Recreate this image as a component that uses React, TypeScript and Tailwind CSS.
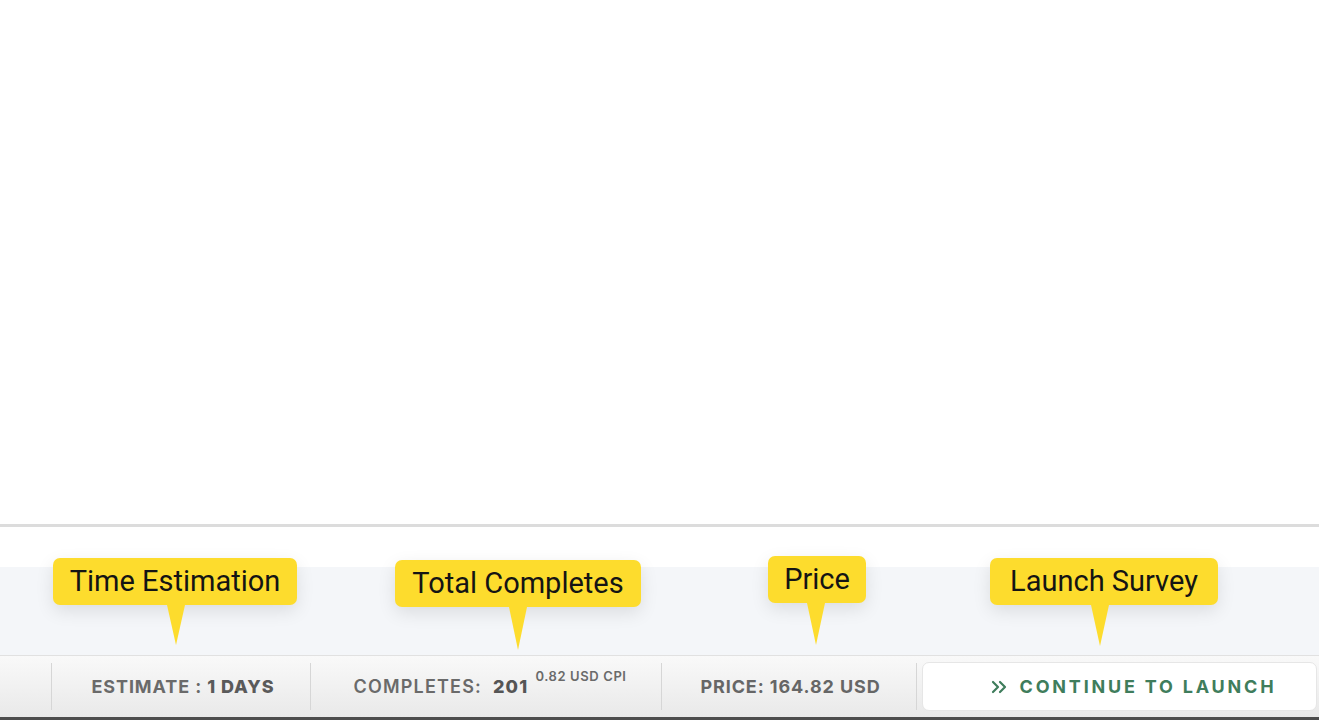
import { ChevronsRight } from 'lucide-react';

type TipProps = {
  label: string;
  className: string;
  tipClass: string;
  tipHeight: number;
};

const Tip = ({ label, className, tipClass, tipHeight }: TipProps) => (
  <div className={`absolute ${className}`}>
    <div className="relative h-full w-full rounded-[7px] bg-[#fddc2d] shadow-[0_6px_18px_rgba(0,0,0,0.10)] flex items-center justify-center font-['Roboto',sans-serif] text-[29px] text-[#141414]">
      {label}
      <svg
        className={`absolute top-full ${tipClass}`}
        width="18"
        height={tipHeight}
        viewBox={`0 0 18 ${tipHeight}`}
      >
        <polygon points={`0,0 18,0 9,${tipHeight}`} fill="#fddc2d" />
      </svg>
    </div>
  </div>
);

const Sep = () => <div className="h-[47px] w-px bg-[#d6d6d6] shrink-0" />;

export default function App() {
  return (
    <div className="relative h-[721px] w-full overflow-hidden bg-white flex flex-col font-['Inter',sans-serif]">
      <div className="h-[524px] shrink-0 bg-white" />
      <div className="h-[3px] shrink-0 bg-[#dcdcdc]" />
      <div className="h-[40px] shrink-0 bg-white" />
      <div className="h-[89px] shrink-0 bg-[#f4f6f9] border-b border-[#e1e1e1]" />

      <div className="h-[61px] shrink-0 flex items-center bg-linear-to-b from-[#f9f9f9] to-[#e9e9e9]">
        <div className="w-[51px] shrink-0" />
        <Sep />
        <div className="w-[258px] shrink-0 flex justify-center pl-[4px] text-[18px] font-bold text-[#6a6a6a] tracking-[0.9px]">
          ESTIMATE :&nbsp; <span className="text-[#5a5a5a] font-extrabold">1 DAYS</span>
        </div>
        <Sep />
        <div className="w-[350px] shrink-0 flex justify-center pl-[8px] text-[18px] font-semibold text-[#6a6a6a] tracking-[1.2px]">
          <span>COMPLETES:&nbsp;</span>
          <span className="font-extrabold text-[#555]">&nbsp;201</span>
          <span className="ml-[7px] text-[13px] font-semibold tracking-[0.6px] -translate-y-[6px]">0.82 USD CPI</span>
        </div>
        <Sep />
        <div className="w-[254px] shrink-0 flex justify-center pl-[3px] text-[18px] font-bold text-[#666] tracking-[0.9px]">
          PRICE: 164.82 USD
        </div>
        <Sep />
        <div className="ml-[5px] mr-[2px] flex-1 h-[49px] rounded-[7px] bg-white border border-[#e6e6e6] flex items-center justify-center gap-[9px] pl-[24px] text-[#3f7d5c]">
          <ChevronsRight size={24} strokeWidth={2.2} />
          <span className="text-[18px] font-bold tracking-[2.8px]">CONTINUE TO LAUNCH</span>
        </div>
      </div>
      <div className="h-[3px] shrink-0 bg-[#4d4d4d]" />

      <Tip label="Time Estimation" className="left-[53px] top-[558px] w-[244px] h-[47px]" tipClass="left-[114px]" tipHeight={40} />
      <Tip label="Total Completes" className="left-[395px] top-[560px] w-[246px] h-[47px]" tipClass="left-[114px]" tipHeight={43} />
      <Tip label="Price" className="left-[768px] top-[556px] w-[98px] h-[47px]" tipClass="left-[39px]" tipHeight={42} />
      <Tip label="Launch Survey" className="left-[990px] top-[558px] w-[228px] h-[47px]" tipClass="left-[101px]" tipHeight={41} />
    </div>
  );
}
